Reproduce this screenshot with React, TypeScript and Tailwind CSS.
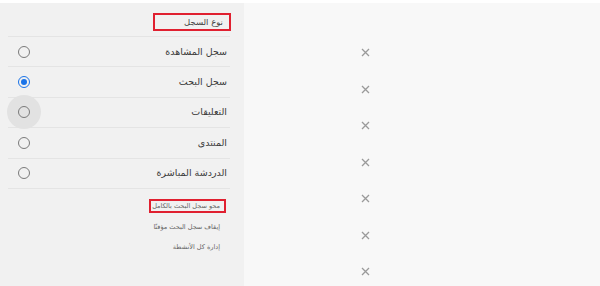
import React from "react";

const rows = [
  { label: "سجل المشاهدة", checked: false, hover: false },
  { label: "سجل البحث", checked: true, hover: false },
  { label: "التعليقات", checked: false, hover: true },
  { label: "المنتدى", checked: false, hover: false },
  { label: "الدردشة المباشرة", checked: false, hover: false },
];

function Radio({ checked, hover }: { checked: boolean; hover: boolean }) {
  return (
    <div className="relative w-[12px] h-[12px] flex items-center justify-center">
      {hover && (
        <div className="absolute left-[-11px] top-[-11px] w-[34px] h-[34px] rounded-full bg-[#e2e2e2]" />
      )}
      <div
        className={
          checked
            ? "relative w-[12px] h-[12px] rounded-full border-[1.5px] border-[#1a73e8] flex items-center justify-center"
            : "relative w-[12px] h-[12px] rounded-full border-[1.5px] border-[#7a7a7a]"
        }
      >
        {checked && <div className="w-[6px] h-[6px] rounded-full bg-[#1a73e8]" />}
      </div>
    </div>
  );
}

function XIcon() {
  return (
    <svg width="9" height="9" viewBox="0 0 9 9">
      <path d="M1 1 L8 8 M8 1 L1 8" stroke="#9a9a9a" strokeWidth="1.3" fill="none" />
    </svg>
  );
}

export default function App() {
  return (
    <div
      className="w-[600px] h-[286px] bg-white pt-[3px] flex overflow-hidden"
      style={{ fontFamily: '"DejaVu Sans", sans-serif' }}
    >
      <div className="w-[244px] h-full bg-[#f1f1f1] flex flex-col">
        <div className="flex justify-end pr-[13px] pt-[10px]">
          <div className="w-[78px] h-[18px] border-2 border-[#e02030] flex items-center justify-end pr-[6px] text-[8.5px] leading-none text-[#444]">
            <span dir="rtl" className="whitespace-nowrap">نوع السجل</span>
          </div>
        </div>
        <div className="ml-[8px] mr-[14px] mt-[5px] border-t border-[#e4e4e4]">
          {rows.map((r) => (
            <div
              key={r.label}
              className="h-[30.4px] border-b border-[#e4e4e4] flex items-center justify-between pl-[10px] pr-[3px]"
            >
              <Radio checked={r.checked} hover={r.hover} />
              <span className="text-[9.5px] text-[#3a3a3a] whitespace-nowrap" dir="rtl">
                {r.label}
              </span>
            </div>
          ))}
        </div>
        <div className="flex flex-col items-end mr-[18px] mt-[10px] text-[6.5px] leading-none text-[#666]">
          <div className="h-[14px] w-[77px] border-2 border-[#e02030] flex items-center justify-end pr-[4px]">
            <span dir="rtl" className="whitespace-nowrap">محو سجل البحث بالكامل</span>
          </div>
          <div className="h-[20.5px] flex items-center pr-[6px] mt-[4px]">
            <span dir="rtl" className="whitespace-nowrap">إيقاف سجل البحث مؤقتًا</span>
          </div>
          <div className="h-[20.5px] flex items-center pr-[6px]">
            <span dir="rtl" className="whitespace-nowrap">إدارة كل الأنشطة</span>
          </div>
        </div>
      </div>
      <div className="flex-1 h-full bg-[#f8f8f8] pl-[117px] pt-[45px] flex flex-col gap-[27.5px]">
        {Array.from({ length: 7 }).map((_, i) => (
          <XIcon key={i} />
        ))}
      </div>
    </div>
  );
}
